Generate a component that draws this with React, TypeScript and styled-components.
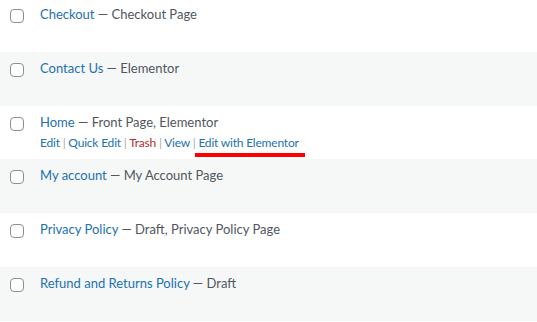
import React from "react";
import styled, { createGlobalStyle } from "styled-components";

const Global = createGlobalStyle`
  html, body { margin: 0; padding: 0; background: #fff; }
  body { font-family: Lato, "Noto Sans", sans-serif; }
`;

const Table = styled.div`
  width: 537px;
  height: 322px;
  overflow: hidden;
`;

const Rows = styled.div`
  margin-top: -2px;
  display: flex;
  flex-direction: column;
`;

const Row = styled.div<{ $alt: boolean }>`
  flex: none;
  height: 53.75px;
  display: flex;
  align-items: flex-start;
  background: ${(p) => (p.$alt ? "#f6f7f7" : "#fff")};
`;

const CheckCell = styled.div`
  flex: none;
  width: 40px;
  box-sizing: border-box;
  padding: 11px 0 0 10px;
`;

const Box = styled.span`
  display: block;
  width: 14px;
  height: 14px;
  box-sizing: border-box;
  border: 1px solid #8c8f94;
  border-radius: 4px;
  background: #fff;
`;

const TitleCell = styled.div`
  padding-top: 6px;
  font-size: 13px;
  line-height: 20px;
  color: #50575e;
`;

const TitleLink = styled.a`
  color: #2271b1;
  text-decoration: none;
`;

const Actions = styled.div`
  margin-top: 1px;
  font-size: 12px;
  letter-spacing: -0.2px;
  line-height: 20px;
  color: #a7aaad;
  white-space: pre;
`;

const ActionLink = styled.a<{ $danger?: boolean }>`
  color: ${(p) => (p.$danger ? "#b32d2e" : "#2271b1")};
  text-decoration: none;
`;

const Marked = styled(ActionLink)`
  position: relative;
  &::after {
    content: "";
    position: absolute;
    left: -3px;
    right: -6px;
    top: 18px;
    height: 4px;
    background: #ff0000;
  }
`;

const Sep = styled.span`
  color: #a7aaad;
`;

type Page = { title: string; state: string; actions?: boolean };

const pages: Page[] = [
  { title: "Checkout", state: "Checkout Page" },
  { title: "Contact Us", state: "Elementor" },
  { title: "Home", state: "Front Page, Elementor", actions: true },
  { title: "My account", state: "My Account Page" },
  { title: "Privacy Policy", state: "Draft, Privacy Policy Page" },
  { title: "Refund and Returns Policy", state: "Draft" },
];

export default function App() {
  return (
    <>
      <Global />
      <Table>
        <Rows>
          {pages.map((p, i) => (
            <Row key={p.title} $alt={i % 2 === 1}>
              <CheckCell>
                <Box />
              </CheckCell>
              <TitleCell>
                <TitleLink href="#">{p.title}</TitleLink> — {p.state}
                {p.actions && (
                  <Actions>
                    <ActionLink href="#">Edit</ActionLink>
                    <Sep>{" | "}</Sep>
                    <ActionLink href="#">Quick Edit</ActionLink>
                    <Sep>{" | "}</Sep>
                    <ActionLink href="#" $danger>Trash</ActionLink>
                    <Sep>{" | "}</Sep>
                    <ActionLink href="#">View</ActionLink>
                    <Sep>{" | "}</Sep>
                    <Marked href="#">Edit with Elementor</Marked>
                  </Actions>
                )}
              </TitleCell>
            </Row>
          ))}
        </Rows>
      </Table>
    </>
  );
}
